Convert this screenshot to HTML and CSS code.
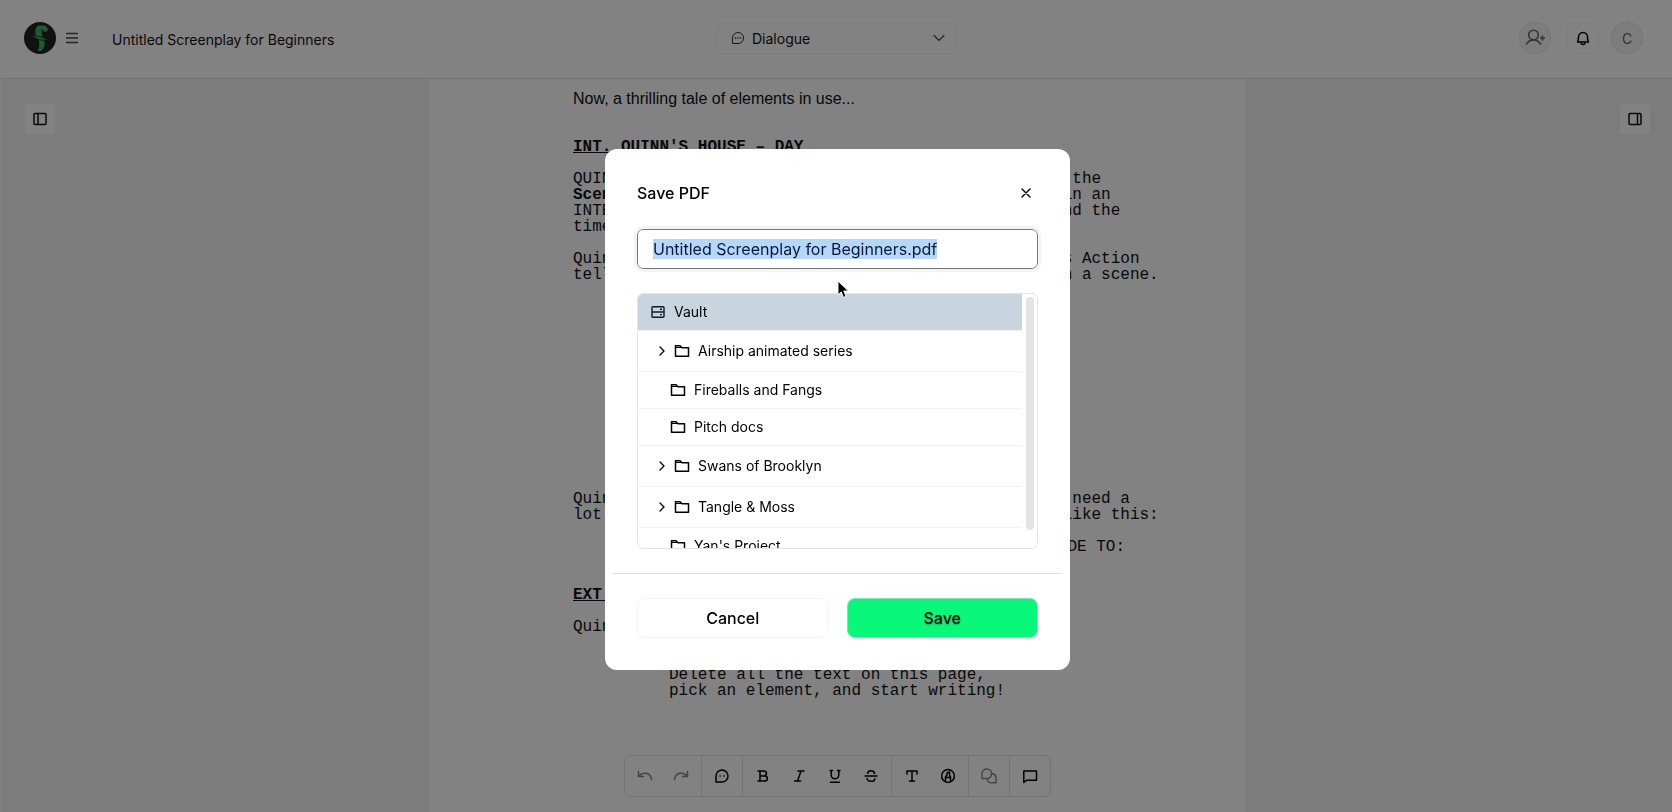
FILE: index.html
```html
<!DOCTYPE html>
<html lang="en">
<head>
  <meta charset="utf-8">
  <title>Untitled Screenplay for Beginners</title>
  <link rel="stylesheet" href="styles.css">
</head>
<body>
  <!-- shared icons -->
  <svg class="sprite" aria-hidden="true">
    <symbol id="folder" viewBox="0 0 16 16">
      <path d="M1.500 13.200V2.800h4.500l2 2h6.500v8.400z" fill="none" stroke="currentColor" stroke-width="1.500" stroke-linejoin="round"/>
      <path d="M2 4.500h5" stroke="currentColor" stroke-width="1.200"/>
    </symbol>
    <symbol id="caret" viewBox="0 0 16 16">
      <path d="M6 4l4 4-4 4" fill="none" stroke="currentColor" stroke-width="1.300" stroke-linecap="round" stroke-linejoin="round"/>
    </symbol>
  </svg>

  <div class="app">
    <header class="topbar">
      <div class="topbar-left">
        <a class="logo" href="#" aria-label="Home">
          <svg width="32" height="32" viewBox="0 0 32 32">
            <circle cx="16" cy="16" r="16" fill="#222"/>
            <path fill="#35b564" d="M14 3.500h6c2 .3 3.500 2 4 4.500l-2.500 2c-2-.3-3-1.800-3.200-3.500-1 2-1 5.500.7 8L12.500 14C10.500 11 10.800 6 14 3.500z"/>
            <path fill="#35b564" d="M8 14l8 1 7.500 2.800-8-.4z"/>
            <path fill="#35b564" d="M14.500 18.300l6 .4c.6 4-.3 8-3.500 10.300h-3.500c2-2.500 2.500-7 1-10.700z"/>
          </svg>
        </a>
        <button class="menu-btn" aria-label="Menu">
          <svg width="16" height="16" viewBox="0 0 16 16" stroke="#444" stroke-width="1.500"><path d="M2 3.500h12M2 8h12M2 12.500h12"/></svg>
        </button>
        <h1 class="doc-title">Untitled Screenplay for Beginners</h1>
      </div>

      <div class="element-picker">
        <svg class="picker-icon" width="14" height="14" viewBox="0 0 14 14" fill="none" stroke="#333">
          <path d="M1.500 12.500V7A5.500 5.500 0 1 1 7 12.500z" stroke-linejoin="round"/>
          <path d="M4 7h1.200M6.400 7h1.200M8.800 7H10" stroke-width="1.300"/>
        </svg>
        <select aria-label="Element type">
          <option>Dialogue</option>
          <option>Action</option>
          <option>Scene Heading</option>
        </select>
        <svg class="picker-arrow" width="12" height="12" viewBox="0 0 12 12" fill="none" stroke="#444" stroke-width="1.200"><path d="M1 3.500l5 5 5-5" stroke-linecap="round"/></svg>
      </div>

      <div class="topbar-right">
        <button class="round-btn" aria-label="Invite">
          <svg width="20" height="18" viewBox="0 0 20 18" fill="none" stroke="#666" stroke-width="1.600">
            <circle cx="8.500" cy="6" r="4.800"/>
            <path d="M1.500 15c1.500-2.500 4-4 7-4s5.500 1.500 7 4" stroke-linecap="round"/>
            <path d="M17.500 6.500v5M15 9h5"/>
          </svg>
        </button>
        <button class="square-btn" aria-label="Notifications">
          <svg width="16" height="16" viewBox="0 0 16 16" fill="none" stroke="#000" stroke-width="1.500" stroke-linejoin="round">
            <path d="M2.500 12c.8-1.500 1-3 1-5a4.500 4.500 0 0 1 9 0c0 2 .2 3.500 1 5z"/>
            <path d="M6 12.500a2 2 0 0 0 4 0"/>
          </svg>
        </button>
        <button class="round-btn avatar">C</button>
      </div>
    </header>

    <main class="workspace">
      <aside class="rail">
        <button class="panel-btn" aria-label="Toggle left panel">
          <svg width="16" height="14" viewBox="0 0 16 14" fill="none" stroke="#111" stroke-width="1.500"><rect x="2" y="1.500" width="12" height="11" rx="1"/><path d="M6 1.500v11"/></svg>
        </button>
      </aside>

      <article class="page">
        <p class="intro">Now, a thrilling tale of elements in use...</p>
        <h2 class="scene">INT. QUINN'S HOUSE – DAY</h2>
        <p class="action">QUINN (30s) sits down at the old desk and types out the
<b>Scene Heading</b> element. Every Scene Heading is used in an
INTERIOR (INT.) or EXTERIOR (EXT.), the location, and the
time of day.</p>
        <p class="action">Quinn keeps typing and looks out at the garden. This Action
tells the reader what happens, and who is present in a scene.</p>
        <p class="dialogue"><span class="speaker">QUINN</span>
When a character talks,
the Dialogue element
goes under the name.</p>
        <p class="dialogue"><span class="speaker">QUINN</span>
And a note on how a
line is spoken goes
in parentheses.</p>
        <p class="dialogue">Simple enough.</p>
        <p class="action">Quinn looks up from the page. Most scripts will not need a
lot of transitions, but when they do, write it out like this:</p>
        <p class="transition">FADE TO:</p>
        <h2 class="scene">EXT. GARDEN – DAY</h2>
        <p class="action">Quinn walks out into the sun.</p>
        <p class="dialogue"><span class="speaker">QUINN</span>
Delete all the text on this page,
pick an element, and start writing!</p>
      </article>

      <aside class="rail rail-right">
        <button class="panel-btn" aria-label="Toggle right panel">
          <svg width="16" height="14" viewBox="0 0 16 14" fill="none" stroke="#111" stroke-width="1.500"><rect x="2" y="1.500" width="12" height="11" rx="1"/><path d="M10.500 1.500v11"/></svg>
        </button>
      </aside>

      <div class="toolbar">
        <div class="tool-group">
          <button class="muted" aria-label="Undo"><svg viewBox="0 0 16 16"><path d="M1.500 3.500v5h5M1.800 8C4 5.500 6.500 4.800 9 5.300c3.200.6 5.200 3 5.500 6.200"/></svg></button>
          <button class="muted" aria-label="Redo"><svg viewBox="0 0 16 16"><path d="M14.500 3.500v5h-5M14.200 8C12 5.500 9.500 4.800 7 5.300c-3.200.6-5.200 3-5.500 6.200"/></svg></button>
        </div>
        <div class="tool-group">
          <button aria-label="Dialogue"><svg viewBox="0 0 16 16"><path d="M2 14V8a6 6 0 1 1 6 6z"/><path d="M6 8h.2M9.800 8h.2"/></svg></button>
        </div>
        <div class="tool-group">
          <button aria-label="Bold"><svg viewBox="0 0 16 16"><path d="M3 3h6a2.400 2.400 0 0 1 0 4.900H5M9 7.900h.8a2.500 2.500 0 0 1 0 5.100H3M5 3v10"/></svg></button>
          <button aria-label="Italic"><svg viewBox="0 0 16 16"><path d="M7 3h6M3.500 13h6M10 3L6.500 13"/></svg></button>
          <button aria-label="Underline"><svg viewBox="0 0 16 16"><path d="M3 2.500h2.500M10.500 2.500H13M4.200 2.500V7a3.800 3.800 0 0 0 7.600 0V2.500M3.500 14.200h9"/></svg></button>
          <button aria-label="Strikethrough"><svg viewBox="0 0 16 16"><path d="M2 8h12M11.500 5.500C11.200 3.800 9.800 2.800 8 2.800S4.800 3.800 4.600 5.300M11.800 10.700c0 1.600-1.700 2.600-3.800 2.600s-3.700-1-3.900-2.800"/></svg></button>
        </div>
        <div class="tool-group">
          <button aria-label="Text"><svg viewBox="0 0 16 16"><path d="M3 6V3h10v3M8 3v10M5.500 13h5"/></svg></button>
          <button aria-label="Highlight"><svg viewBox="0 0 16 16"><circle cx="8" cy="8" r="6.400"/><path d="M5.500 13V9l1.500-2V5l2.500-1V7L10.500 9v4M5.500 9.500h5"/></svg></button>
        </div>
        <div class="tool-group">
          <button class="muted" aria-label="Alternates"><svg viewBox="0 0 16 16"><path d="M1 10.500V5.500a4.800 4.800 0 1 1 4.800 5z"/><path d="M11 5.500a4.500 4.500 0 0 1 4 4.500V14.800h-4.500a4.500 4.500 0 0 1-4.300-3.500"/></svg></button>
        </div>
        <div class="tool-group">
          <button aria-label="Comment"><svg viewBox="0 0 16 16"><path d="M1.800 14.500V3h12.700v9.300H4.500z"/></svg></button>
        </div>
      </div>
    </main>
  </div>

  <div class="overlay">
    <form class="modal" role="dialog" aria-labelledby="modal-title">
      <div class="modal-body">
        <div class="modal-head">
          <h2 id="modal-title">Save PDF</h2>
          <button type="button" class="close-btn" aria-label="Close">
            <svg width="12" height="12" viewBox="0 0 12 12" stroke="#000" stroke-width="1.400" stroke-linecap="round"><path d="M2 2l8 8M10 2l-8 8"/></svg>
          </button>
        </div>
        <input id="filename" class="filename" type="text" aria-label="File name" value="Untitled Screenplay for Beginners.pdf">
        <div class="tree-box">
          <ul class="tree">
            <li class="root">
              <svg width="16" height="16" viewBox="0 0 16 16" fill="none" stroke="#111a22" stroke-width="1.400"><rect x="2" y="2.700" width="12" height="10.600" rx="1"/><path d="M2 8h12M10 5.300h2M10 10.600h2"/></svg>
              Vault
            </li>
            <li class="parent"><button type="button" aria-label="Expand"><svg><use href="#caret"/></svg></button><svg><use href="#folder"/></svg>Airship animated series</li>
            <li><svg><use href="#folder"/></svg>Fireballs and Fangs</li>
            <li><svg><use href="#folder"/></svg>Pitch docs</li>
            <li class="parent"><button type="button" aria-label="Expand"><svg><use href="#caret"/></svg></button><svg><use href="#folder"/></svg>Swans of Brooklyn</li>
            <li class="parent"><button type="button" aria-label="Expand"><svg><use href="#caret"/></svg></button><svg><use href="#folder"/></svg>Tangle &amp; Moss</li>
            <li><svg><use href="#folder"/></svg>Yan's Project</li>
          </ul>
          <div class="scroll-thumb"></div>
        </div>
      </div>
      <div class="modal-actions">
        <button type="button" class="btn">Cancel</button>
        <button type="submit" class="btn btn-primary">Save</button>
      </div>
      <svg class="pointer" width="14" height="20" viewBox="0 0 14 20"><path d="M1 1v14l3.200-3 2.300 5.500 2.600-1.100L6.800 11H11.500z" fill="#000" stroke="#fff"/></svg>
    </form>
  </div>

  <script>
    const filename = document.getElementById('filename');
    filename.focus();
    filename.select();
  </script>
</body>
</html>
```
FILE: styles.css
```css
* {
  box-sizing: border-box;
}
body {
  margin: 0;
  font-family: Inter, sans-serif;
  color: #111;
  background: #fff;
}
button, input, select {
  font-family: inherit;
  color: inherit;
}
button {
  display: flex;
  align-items: center;
  justify-content: center;
  padding: 0;
  border: 0;
  background: none;
  cursor: pointer;
}
h1, h2, p, ul {
  margin: 0;
  padding: 0;
}
.sprite {
  display: none;
}
.app {
  display: flex;
  flex-direction: column;
  height: 100vh;
  border-left: 1px solid #fff;
  overflow: hidden;
}

/* top bar */
.topbar {
  display: grid;
  grid-template-columns: 1fr 240px 1fr;
  align-items: center;
  padding: 22px 22px 24px 23px;
  border-bottom: 1px solid #e0e0e0;
}
.topbar-left {
  display: flex;
  align-items: center;
}
.logo {
  display: flex;
}
.menu-btn {
  width: 32px;
  height: 32px;
}
.menu-btn svg {
  width: 16px;
  height: 16px;
}
.doc-title {
  margin-left: 24px;
  padding-top: 4px;
  font-size: 14px;
  line-height: 20px;
  font-weight: 400;
}
.element-picker {
  position: relative;
}
.element-picker select {
  display: block;
  width: 100%;
  height: 32px;
  padding: 0 34px;
  font-size: 14px;
  appearance: none;
  background: #fff;
  border: 1px solid #f8f8f8;
  border-bottom-color: #f0f0f0;
  border-radius: 6px;
}
.picker-icon {
  position: absolute;
  left: 14px;
  top: 9px;
}
.picker-arrow {
  position: absolute;
  right: 12px;
  top: 10px;
}
.topbar-right {
  display: flex;
  justify-content: flex-end;
  padding-right: 7px;
}
.round-btn, .square-btn {
  width: 32px;
  height: 32px;
}
.round-btn {
  border: 1px dashed #dcdcdc;
  border-radius: 50%;
  background: #f5f5f5;
}
.square-btn {
  margin: 0 12px 0 16px;
  border: 1px solid #f5f5f5;
  border-radius: 6px;
}
.avatar {
  font-size: 14px;
  color: #666;
}

/* workspace */
.workspace {
  position: relative;
  display: flex;
  flex: 1;
  min-height: 0;
  padding-left: 1px;
  background: #f4f4f4;
}
.rail {
  flex: 1;
  padding: 25px 22px 0 23px;
}
.rail-right {
  display: flex;
  justify-content: flex-end;
}
.panel-btn {
  width: 30px;
  height: 30px;
  border-radius: 4px;
  background: #fff;
}
.page {
  width: 816px;
  padding: 12px 84px 0 144px;
  background: #fff;
  font-family: "Liberation Mono", monospace;
  font-size: 16px;
  line-height: 16px;
}
.page p {
  white-space: pre;
}
.page .intro {
  margin-bottom: 32px;
  font-family: "Liberation Sans", sans-serif;
}
.scene {
  margin-bottom: 16px;
  font-size: 16px;
  text-decoration: underline;
}
.action, .dialogue {
  margin-bottom: 16px;
}
.dialogue {
  padding-left: 96px;
}
.speaker {
  padding-left: 96px;
}
.transition {
  margin-bottom: 32px;
  padding-right: 36px;
  text-align: right;
}

/* formatting toolbar */
.toolbar {
  position: absolute;
  left: 2px;
  right: 0;
  bottom: 15px;
  display: flex;
  width: max-content;
  margin: 0 auto;
  border: 1px solid #e4e4e4;
  border-radius: 6px;
  background: #fff;
}
.tool-group {
  display: flex;
  padding: 2px;
}
.tool-group + .tool-group {
  border-left: 1px solid #e0e0e0;
}
.tool-group button {
  width: 36px;
  height: 36px;
}
.tool-group svg {
  width: 16px;
  height: 16px;
  fill: none;
  stroke: #000;
  stroke-width: 1.5;
  stroke-linecap: round;
  stroke-linejoin: round;
}
.tool-group .muted svg {
  stroke: #888;
}

/* save dialog */
.overlay {
  position: fixed;
  inset: 0;
  display: flex;
  align-items: center;
  justify-content: center;
  padding: 6px 0 0 3px;
  background: rgba(0, 0, 0, 0.49);
}
.modal {
  position: relative;
  width: 465px;
  border-radius: 12px;
  background: #fff;
  color: #000;
}
.modal-body {
  padding: 32px 32px 24px;
}
.modal-head {
  display: flex;
  align-items: center;
  justify-content: space-between;
  margin-bottom: 24px;
}
.modal-head h2 {
  font-size: 16px;
  line-height: 24px;
  font-weight: 500;
}
.close-btn {
  width: 24px;
  height: 24px;
}
.filename {
  display: block;
  width: 100%;
  height: 40px;
  padding: 0 15px;
  font-size: 16px;
  line-height: 24px;
  border: 1px solid #777;
  border-radius: 6px;
  outline: 3px solid #f4f4f4;
}
.filename::selection {
  background: #b3d7ff;
  color: #0b1a2c;
}
.tree-box {
  position: relative;
  height: 256px;
  margin-top: 24px;
  padding-right: 15px;
  border: 1px solid #e4e4e4;
  border-radius: 6px;
  overflow: hidden;
}
.tree {
  list-style: none;
  font-size: 14px;
}
.tree li {
  display: flex;
  align-items: center;
  gap: 8px;
  height: 37px;
  padding-left: 32px;
  border-bottom: 1px solid #f2f2f2;
}
.tree svg {
  width: 16px;
  height: 16px;
}
.tree .parent {
  height: 41px;
  padding-left: 16px;
}
.tree .parent button {
  width: 16px;
  margin-right: -4px;
}
.tree .root {
  padding-left: 12px;
  background: #c8d5df;
}
.scroll-thumb {
  position: absolute;
  top: 3px;
  right: 3px;
  width: 8px;
  height: 233px;
  border-radius: 4px;
  background: #e4e4e4;
}
.modal-actions {
  display: flex;
  gap: 18px;
  margin: 0 8px;
  padding: 24px 24px 32px;
  border-top: 1px solid #e0e0e0;
}
.btn {
  flex: 1;
  height: 40px;
  font-size: 16px;
  font-weight: 500;
  border: 1px solid #f4f4f4;
  border-radius: 8px;
}
.btn-primary {
  border-color: #7fe3b0;
  background: #09f87a;
  text-shadow: 0 1px 2px rgba(0, 0, 0, 0.3);
}
.pointer {
  position: absolute;
  left: 232px;
  top: 131px;
}
```
